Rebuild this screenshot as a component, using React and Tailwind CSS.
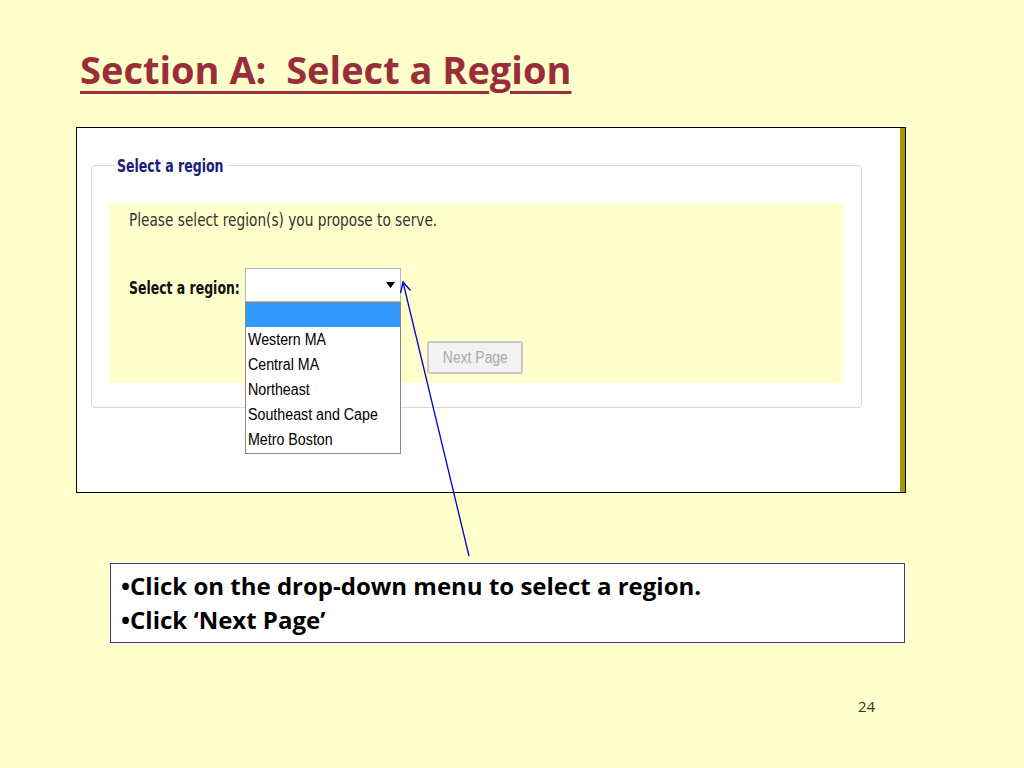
const regions = ["Western MA", "Central MA", "Northeast", "Southeast and Cape", "Metro Boston"];

const verdana = { fontFamily: '"DejaVu Sans Condensed", "DejaVu Sans", Verdana, sans-serif' };
const arial = { fontFamily: '"Liberation Sans", Arial, sans-serif' };

const App = () => {
	return (
		<div className="relative w-[1024px] h-[768px] overflow-hidden bg-[#ffffcc] font-['Open_Sans','Lato',sans-serif]">
			<div className="pl-[80px] pt-[44px]">
				<h1 className="text-[38px] leading-[50px] font-bold text-[#9b2d3a] underline decoration-[3px] underline-offset-[7px] whitespace-pre">
					{"Section A:  Select a Region"}
				</h1>
			</div>

			{/* screenshot of the web form */}
			<div className="ml-[76px] mt-[33px] w-[830px] h-[366px] border border-black bg-white">
				<div className="h-full border-r-[5px] border-r-[#a99600] pl-[14px] pt-[37px]">
					<div className="relative w-[771px] h-[243px] border border-[#d8d8d8] rounded-[4px]">
						<div
							className="absolute left-[22px] -top-[11px] bg-white pl-[3px] w-[114px] whitespace-nowrap text-[17px] font-bold text-[#1c1c7a] leading-[22px]"
							style={verdana}
						>
							<span className="inline-block origin-left scale-x-[0.82]">Select a region</span>
						</div>
						<div className="ml-[17px] mr-[18px] mt-[37px] h-[180px] bg-[#ffffcc] pl-[20px] pt-[6px]">
							<p className="text-[17px] leading-[22px] text-[#333] whitespace-nowrap" style={verdana}>
								<span className="inline-block origin-left scale-x-[0.895]">Please select region(s) you propose to serve.</span>
							</p>
							<div className="mt-[37px] flex items-center">
								<span className="w-[116px] pt-[8px] whitespace-nowrap text-[17px] font-bold text-[#111]" style={verdana}>
									<span className="inline-block origin-left scale-x-[0.815]">Select a region:</span>
								</span>
								<div className="relative">
									<div className="w-[156px] h-[34px] border border-[#a7b8cc] bg-white flex items-center justify-end pr-[5px]">
										<svg width="9" height="6" viewBox="0 0 9 6">
											<path d="M0 0 L9 0 L4.5 6 Z" fill="#000" />
										</svg>
									</div>
									<div
										className="absolute left-0 top-[34px] w-[156px] border border-[#888] bg-white z-10 text-[16px] text-black leading-[24px] whitespace-nowrap"
										style={arial}
									>
										<div className="h-[24px] bg-[#3399ff]" />
										{regions.map((r) => (
											<div key={r} className="pl-[2px] pt-[1px] last:pb-[1px]">
												<span className="inline-block origin-left scale-x-[0.89]">{r}</span>
											</div>
										))}
									</div>
								</div>
							</div>
							<div className="mt-[39px] ml-[298px]">
								<button
									className="w-[96px] h-[33px] rounded-[3px] border-2 border-[#c8c8c8] bg-[#f2f2f2] text-[16px] text-[#a8a8a8] whitespace-nowrap"
									style={arial}
								>
									<span className="inline-block scale-x-[0.87]">Next Page</span>
								</button>
							</div>
						</div>
					</div>
				</div>
			</div>

			{/* instruction callout */}
			<div className="ml-[110px] mt-[70px] w-[795px] h-[80px] border border-[#3b3b9a] bg-white pl-[10px] pt-[5px] text-[24px] font-bold leading-[34px] text-black">
				<div>•Click on the drop-down menu to select a region.</div>
				<div>•Click ‘Next Page’</div>
			</div>

			<div className="absolute left-[858px] top-[695px] text-[15px] text-[#333]">24</div>

			<svg className="absolute left-0 top-0 pointer-events-none" width="1024" height="768">
				<line x1="469" y1="556" x2="403" y2="282" stroke="#0000cc" strokeWidth="1.3" />
				<polyline points="400.6,293 403,282 410.5,290.5" fill="none" stroke="#0000cc" strokeWidth="1.3" />
			</svg>
		</div>
	);
};

export default App;
